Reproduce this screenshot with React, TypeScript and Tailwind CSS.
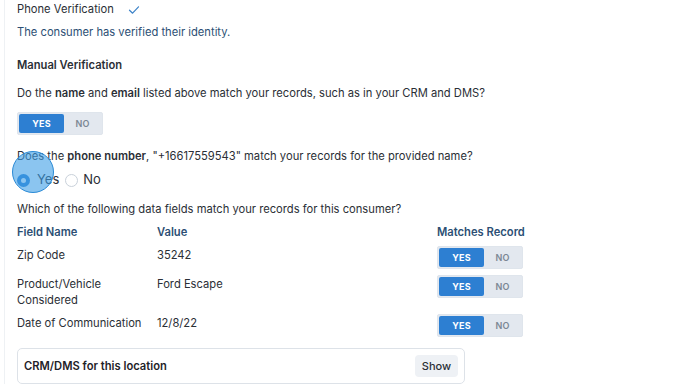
function Toggle() {
  return (
    <div className="flex h-[23px] w-[86px] items-stretch rounded-[2px] border border-[#dfe5ec] bg-[#e3e8ef] p-[1px]">
      <div className="flex w-[45px] items-center justify-center rounded-[2px] bg-[#2d7fd2] text-[9px] font-bold tracking-wide text-white">
        YES
      </div>
      <div className="flex flex-1 items-center justify-center text-[9px] font-semibold tracking-wide text-[#7c8794]">
        NO
      </div>
    </div>
  );
}

const rows = [
  { name: "Zip Code", value: "35242", h: "h-[29px]" },
  { name: "Product/Vehicle Considered", value: "Ford Escape", h: "h-[39px]" },
  { name: "Date of Communication", value: "12/8/22", h: "h-[29px]" },
];

export default function App() {
  return (
    <div className="relative h-[384px] w-[688px] overflow-hidden bg-white font-['Inter',sans-serif] text-[11.2px] text-[#2b2f36]">
      <div className="absolute left-[4px] top-0 h-full w-px bg-[#eef1f4]" />
      <div className="pl-[17px]">
        <div className="flex h-[18px] items-center pt-[1px]">
          <span>Phone Verification</span>
          <svg className="ml-[14px]" width="12" height="12" viewBox="0 0 12 12" fill="none">
            <path d="M1.5 6.2 4.6 9.2 10.5 2.8" stroke="#3b82c8" strokeWidth="1.2" strokeLinecap="round" strokeLinejoin="round" />
          </svg>
        </div>
        <p className="mt-[5px] leading-[18px] text-[#2c4f74]">The consumer has verified their identity.</p>
        <p className="mt-[15px] leading-[18px] font-semibold">Manual Verification</p>
        <p className="mt-[10px] leading-[18px]">
          Do the <b className="font-semibold">name</b> and <b className="font-semibold">email</b> listed above match your records, such as in your CRM and DMS?
        </p>
        <div className="mt-[10px]">
          <Toggle />
        </div>
        <p className="mt-[12px] leading-[18px]">
          Does the <b className="font-semibold">phone number</b>, "+16617559543" match your records for the provided name?
        </p>
        <div className="mt-[6px] flex h-[18px] items-center text-[13px]">
          <span className="flex h-[13px] w-[13px] items-center justify-center rounded-full bg-[#2d7fd2]">
            <span className="h-[5px] w-[5px] rounded-full bg-white" />
          </span>
          <span className="ml-[7px]">Yes</span>
          <span className="ml-[6px] h-[13px] w-[13px] rounded-full border border-[#c9d1da] bg-white" />
          <span className="ml-[5px]">No</span>
        </div>
        <p className="mt-[11px] leading-[18px]">Which of the following data fields match your records for this consumer?</p>
        <div className="mt-[5px] grid grid-cols-[140px_280px_100px] leading-[16px]">
          <div className="flex h-[18px] items-center font-semibold text-[#2c4f74]">Field Name</div>
          <div className="flex h-[18px] items-center font-semibold text-[#2c4f74]">Value</div>
          <div className="flex h-[18px] items-center font-semibold text-[#2c4f74]">Matches Record</div>
          {rows.map((r) => (
            <div key={r.name} className={`col-span-3 grid grid-cols-[140px_280px_100px] ${r.h}`}>
              <div className="pt-[6px] pr-[8px]">{r.name}</div>
              <div className="pt-[6px]">{r.value}</div>
              <div className="pt-[5px]">
                <Toggle />
              </div>
            </div>
          ))}
        </div>
        <div className="mt-[10px] flex h-[36px] w-[448px] items-center justify-between rounded-[5px] border border-[#dde2e8] pl-[6px] pr-[6px]">
          <span className="font-semibold text-[#1f2329]">CRM/DMS for this location</span>
          <span className="flex h-[22px] w-[43px] items-center justify-center rounded-[4px] bg-[#eef1f5] text-[11px] font-medium">Show</span>
        </div>
      </div>
      <div className="absolute left-[12px] top-[151px] h-[42px] w-[42px] rounded-full border-[1.5px] border-[#2a8ad6] bg-[#3d9fe6]/60" />
    </div>
  );
}
